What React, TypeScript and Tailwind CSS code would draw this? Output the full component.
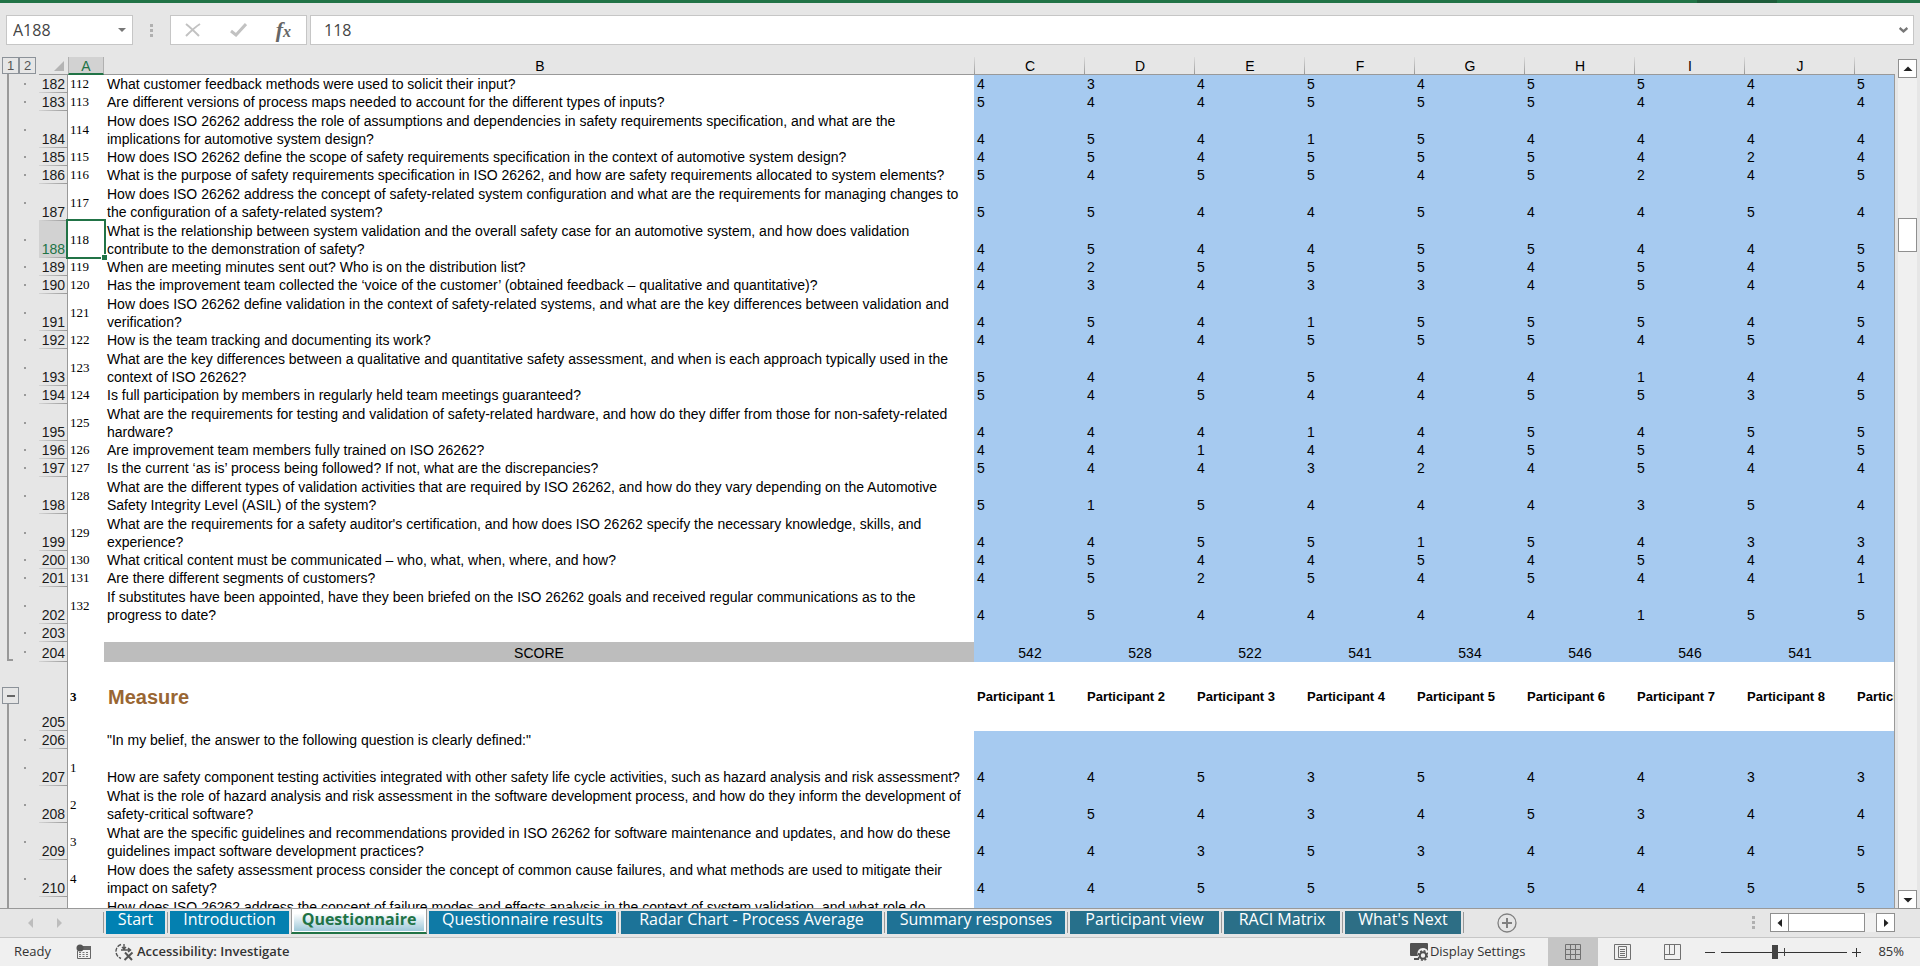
import type { ReactNode } from "react";

type Row = {
  n: number;
  id?: string;
  text?: string[];
  scores?: string;
};

const ROWS: Row[] = [
  { n: 182, id: "112", text: ["What customer feedback methods were used to solicit their input?"], scores: "434545545" },
  { n: 183, id: "113", text: ["Are different versions of process maps needed to account for the different types of inputs?"], scores: "544555444" },
  { n: 184, id: "114", text: ["How does ISO 26262 address the role of assumptions and dependencies in safety requirements specification, and what are the", "implications for automotive system design?"], scores: "454154444" },
  { n: 185, id: "115", text: ["How does ISO 26262 define the scope of safety requirements specification in the context of automotive system design?"], scores: "454555424" },
  { n: 186, id: "116", text: ["What is the purpose of safety requirements specification in ISO 26262, and how are safety requirements allocated to system elements?"], scores: "545545245" },
  { n: 187, id: "117", text: ["How does ISO 26262 address the concept of safety-related system configuration and what are the requirements for managing changes to", "the configuration of a safety-related system?"], scores: "554454454" },
  { n: 188, id: "118", text: ["What is the relationship between system validation and the overall safety case for an automotive system, and how does validation", "contribute to the demonstration of safety?"], scores: "454455445" },
  { n: 189, id: "119", text: ["When are meeting minutes sent out? Who is on the distribution list?"], scores: "425554545" },
  { n: 190, id: "120", text: ["Has the improvement team collected the ‘voice of the customer’ (obtained feedback – qualitative and quantitative)?"], scores: "434334544" },
  { n: 191, id: "121", text: ["How does ISO 26262 define validation in the context of safety-related systems, and what are the key differences between validation and", "verification?"], scores: "454155545" },
  { n: 192, id: "122", text: ["How is the team tracking and documenting its work?"], scores: "444555454" },
  { n: 193, id: "123", text: ["What are the key differences between a qualitative and quantitative safety assessment, and when is each approach typically used in the", "context of ISO 26262?"], scores: "544544144" },
  { n: 194, id: "124", text: ["Is full participation by members in regularly held team meetings guaranteed?"], scores: "545445535" },
  { n: 195, id: "125", text: ["What are the requirements for testing and validation of safety-related hardware, and how do they differ from those for non-safety-related", "hardware?"], scores: "444145455" },
  { n: 196, id: "126", text: ["Are improvement team members fully trained on ISO 26262?"], scores: "441445545" },
  { n: 197, id: "127", text: ["Is the current ‘as is’ process being followed? If not, what are the discrepancies?"], scores: "544324544" },
  { n: 198, id: "128", text: ["What are the different types of validation activities that are required by ISO 26262, and how do they vary depending on the Automotive", "Safety Integrity Level (ASIL) of the system?"], scores: "515444354" },
  { n: 199, id: "129", text: ["What are the requirements for a safety auditor's certification, and how does ISO 26262 specify the necessary knowledge, skills, and", "experience?"], scores: "445515433" },
  { n: 200, id: "130", text: ["What critical content must be communicated – who, what, when, where, and how?"], scores: "454454544" },
  { n: 201, id: "131", text: ["Are there different segments of customers?"], scores: "452545441" },
  { n: 202, id: "132", text: ["If substitutes have been appointed, have they been briefed on the ISO 26262 goals and received regular communications as to the", "progress to date?"], scores: "454444155" },
];

const MEASURE_ROWS: Row[] = [
  { n: 207, id: "1", text: ["", "How are safety component testing activities integrated with other safety life cycle activities, such as hazard analysis and risk assessment?"], scores: "445354433" },
  { n: 208, id: "2", text: ["What is the role of hazard analysis and risk assessment in the software development process, and how do they inform the development of", "safety-critical software?"], scores: "454345344" },
  { n: 209, id: "3", text: ["What are the specific guidelines and recommendations provided in ISO 26262 for software maintenance and updates, and how do these", "guidelines impact software development practices?"], scores: "443534445" },
  { n: 210, id: "4", text: ["How does the safety assessment process consider the concept of common cause failures, and what methods are used to mitigate their", "impact on safety?"], scores: "445555455" },
];

const TOTALS = ["542", "528", "522", "541", "534", "546", "546", "541", ""];
const COLUMNS = ["C", "D", "E", "F", "G", "H", "I", "J", ""];

const TABS = [
  { label: "Start", style: "w-[59px] bg-[#0081b3]" },
  { label: "Introduction", style: "w-[119px] bg-[#0480b0]" },
  { label: "Questionnaire", style: "" },
  { label: "Questionnaire results", style: "w-[187px] bg-[#0f7aa6]" },
  { label: "Radar Chart - Process Average", style: "w-[261px] bg-[#1c7398]" },
  { label: "Summary responses", style: "w-[178px] bg-[#1f7295]" },
  { label: "Participant view", style: "w-[149px] bg-[#27708b]" },
  { label: "RACI Matrix", style: "w-[116px] bg-[#2a6f88]" },
  { label: "What's Next", style: "w-[116px] bg-[#2d6e85]" },
];

function Dots() {
  return (
    <div className="flex flex-col gap-[2px]">
      <span className="size-[3px] bg-[#b0b0b0]" />
      <span className="size-[3px] bg-[#b0b0b0]" />
      <span className="size-[3px] bg-[#b0b0b0]" />
    </div>
  );
}

function RowHead({ n, dot = true, active = false }: { n?: number; dot?: boolean; active?: boolean }) {
  return (
    <>
      <td className="pl-[5px] align-middle">{dot && <span className="block size-[2px] bg-[#999]" />}</td>
      <th
        scope="row"
        className={`border-r border-[#999] bg-[linear-gradient(to_right,#d4d4d4,#999)] bg-[length:100%_1px] bg-bottom bg-no-repeat pr-[2px] text-right align-bottom font-normal ${
          active ? "bg-[#d2d2d2] text-[#217346]" : "text-[#1a1a1a]"
        }`}
      >
        {n}
      </th>
    </>
  );
}

function QuestionRow({ row }: { row: Row }) {
  const active = row.n === 188;
  return (
    <tr className={row.text && row.text.length > 1 ? "h-[37px]" : "h-[18px]"}>
      <RowHead n={row.n} active={active} />
      <td className="relative bg-white pl-[2px] align-middle font-['Liberation_Serif',serif] text-[13px] leading-4">
        {row.id}
        {active && (
          <span className="pointer-events-none absolute -top-[2px] -right-[2px] -bottom-px -left-[2px] z-10 border-2 border-[#217346]">
            <span className="absolute -right-[4px] -bottom-[4px] size-[7px] border border-white bg-[#217346]" />
          </span>
        )}
      </td>
      <td className="bg-white pl-[3px] align-bottom whitespace-nowrap">
        {row.text?.map((line) => (
          <span key={line} className="block">
            {line}
          </span>
        ))}
      </td>
      {row.scores?.split("").map((s, i) => (
        <td key={i} className="bg-[#a6caf0] pl-[3px] align-bottom">
          {s}
        </td>
      ))}
    </tr>
  );
}

function Sheet() {
  return (
    <table className="w-[1926px] table-fixed border-separate border-spacing-0 font-['Liberation_Sans',Arial,sans-serif] text-[14px] leading-[18px] text-black">
      <colgroup>
        <col className="w-[20px]" />
        <col className="w-[29px]" />
        <col className="w-[36px]" />
        <col className="w-[870px]" />
        {COLUMNS.map((_, i) => (
          <col key={i} className="w-[110px]" />
        ))}
      </colgroup>
      <thead>
        <tr className="h-[18px]">
          <td className="align-top">
            <LevelButton>2</LevelButton>
          </td>
          <td className="border-b border-[#999]">
            <svg className="ml-[15px] block size-[10px]" viewBox="0 0 10 10">
              <path d="M10 0v10H0z" fill="#b4b4b4" />
            </svg>
          </td>
          <th scope="col" className="border-x border-b-2 border-x-[#b0b0b0] border-b-[#217346] bg-[#d2d2d2] pt-[2px] leading-[14px] font-normal text-[#217346]">
            A
          </th>
          <th scope="col" className="border-b border-[#999] pt-[2px] pl-[2px] leading-[15px] font-normal">
            B
          </th>
          {COLUMNS.map((c, i) => (
            <th
              key={i}
              scope="col"
              className="border-b border-[#999] bg-[linear-gradient(to_bottom,#dcdcdc,#999)] bg-[length:1px_100%] bg-left bg-no-repeat pt-[2px] pl-[2px] leading-[15px] font-normal"
            >
              {c}
            </th>
          ))}
        </tr>
      </thead>
      <tbody>
        {ROWS.map((row) => (
          <QuestionRow key={row.n} row={row} />
        ))}
        <tr className="h-[18px]">
          <RowHead n={203} />
          <td className="bg-white" />
          <td className="bg-white" />
          <td colSpan={9} className="bg-[#a6caf0]" />
        </tr>
        <tr className="h-[20px]">
          <RowHead n={204} />
          <td className="bg-white" />
          <td className="bg-[#bdbdbd] text-center align-bottom">SCORE</td>
          {TOTALS.map((t, i) => (
            <td key={i} className="bg-[#a6caf0] pl-[2px] text-center align-bottom">
              {t}
            </td>
          ))}
        </tr>
        <tr className="h-[69px]">
          <RowHead n={205} dot={false} />
          <td className="bg-white pl-[2px] align-middle font-['Liberation_Serif',serif] text-[13px] font-bold">3</td>
          <td className="bg-white pl-1 align-middle text-[20px] font-bold text-[#996633]">Measure</td>
          {COLUMNS.map((_, i) => (
            <td key={i} className="bg-white pl-[3px] align-middle text-[13px] font-bold whitespace-nowrap">
              Participant {i + 1}
            </td>
          ))}
        </tr>
        <tr className="h-[18px]">
          <RowHead n={206} />
          <td className="bg-white" />
          <td className="bg-white pl-[3px]">"In my belief, the answer to the following question is clearly defined:"</td>
          <td colSpan={9} className="bg-[#a6caf0]" />
        </tr>
        {MEASURE_ROWS.map((row) => (
          <QuestionRow key={row.n} row={row} />
        ))}
        <tr className="h-[37px]">
          <RowHead dot={false} />
          <td className="bg-white" />
          <td className="bg-white pt-px pl-[3px] align-top whitespace-nowrap">
            How does ISO 26262 address the concept of failure modes and effects analysis in the context of system validation, and what role do
          </td>
          <td colSpan={9} className="bg-[#a6caf0]" />
        </tr>
      </tbody>
    </table>
  );
}

function LevelButton({ children }: { children: ReactNode }) {
  return (
    <button className="flex h-[17px] w-[17px] shrink-0 items-center justify-center border border-[#8c9299] font-['Liberation_Sans',Arial,sans-serif] text-[13px] leading-none text-[#555]">
      {children}
    </button>
  );
}

function FormulaBar() {
  return (
    <div className="flex h-[30px] items-stretch pr-[6px] pl-[6px] text-[16px] text-[#444]">
      <div className="flex w-[127px] items-center border border-[#c6c6c6] bg-white pr-[6px] pl-[6px]">
        <input aria-label="Name box" defaultValue="A188" className="w-full min-w-0 bg-transparent outline-none" />
        <svg className="h-1 w-2 shrink-0" viewBox="0 0 8 4">
          <path d="M0 0h8L4 4z" fill="#777" />
        </svg>
      </div>
      <div className="flex w-[37px] items-center justify-center">
        <Dots />
      </div>
      <div className="flex w-[137px] items-center justify-between border border-[#c6c6c6] bg-white pr-[15px] pl-[14px]">
        <button aria-label="Cancel">
          <svg className="h-[14px] w-[16px]" viewBox="0 0 16 14" fill="none" stroke="#c2c2c2" strokeWidth="2">
            <path d="M1 1c5 4 9 8 13 12M15 1C10 4 5 9 1 13" />
          </svg>
        </button>
        <button aria-label="Enter">
          <svg className="h-[14px] w-[17px]" viewBox="0 0 17 14" fill="none" stroke="#c2c2c2" strokeWidth="3">
            <path d="M1 8l5 4L16 1" />
          </svg>
        </button>
        <button aria-label="Insert function" className="flex items-baseline font-['Liberation_Serif',serif] text-[22px] leading-none font-bold text-[#666] italic">
          f<span className="text-[16px]">x</span>
        </button>
      </div>
      <div className="ml-[3px] flex min-w-0 flex-1 items-center border border-[#c6c6c6] bg-white pr-[5px] pl-[13px]">
        <input aria-label="Formula" defaultValue="118" className="min-w-0 flex-1 bg-transparent outline-none" />
        <svg className="h-[6px] w-[9px]" viewBox="0 0 9 6" fill="none" stroke="#777" strokeWidth="2.4">
          <path d="M.6 1l3.9 3.4L8.4 1" />
        </svg>
      </div>
    </div>
  );
}

function Outline() {
  return (
    <div className="flex w-[19px] shrink-0 flex-col pl-[2px]">
      <LevelButton>1</LevelButton>
      <div className="ml-[5px] h-[587px] w-[6px] shrink-0 border-b-2 border-l-2 border-[#999]" />
      <button aria-label="Collapse group" className="mt-[26px] flex size-[17px] shrink-0 items-center justify-center border border-[#8c9299]">
        <span className="h-[2px] w-2 bg-[#666]" />
      </button>
      <div className="ml-[5px] flex-1 border-l-2 border-[#999]" />
    </div>
  );
}

function ArrowButton({ label, d }: { label: string; d: string }) {
  return (
    <button aria-label={label} className="flex size-[19px] shrink-0 items-center justify-center border border-[#8f8f8f] bg-white">
      <svg className="size-[10px]" viewBox="0 0 10 10">
        <path d={d} fill="#222" />
      </svg>
    </button>
  );
}

function SheetTabs() {
  return (
    <div className="flex h-[28px] shrink-0 items-start bg-[#e6e6e6] pr-[25px]">
      <div className="flex h-[28px] w-[103px] shrink-0 items-center gap-[24px] pl-[28px]">
        <svg className="h-[10px] w-[5px]" viewBox="0 0 5 10">
          <path d="M5 0v10L0 5z" fill="#bdbdbd" />
        </svg>
        <svg className="h-[10px] w-[5px]" viewBox="0 0 5 10">
          <path d="M0 0v10l5-5z" fill="#bdbdbd" />
        </svg>
      </div>
      <nav className="flex text-[16px] leading-4 text-white">
        <span className="mt-[3px] h-[21px] w-px bg-[#999]" />
        {TABS.map((t) =>
          t.label === "Questionnaire" ? (
            <a
              key={t.label}
              href="#questionnaire"
              className="-ml-px h-[25px] w-[136px] border-x border-b-2 border-x-[#999] border-b-[#217346] bg-white px-[2px] text-center font-bold text-[#217346]"
            >
              <span className="block h-[22px] bg-linear-to-b from-white from-20% to-[#9dc8d9] pt-[2px]">{t.label}</span>
            </a>
          ) : (
            <span key={t.label} className="flex">
              <a href="#sheet" className={`mt-[2px] ml-[2px] block h-[23px] text-center whitespace-nowrap ${t.style}`}>
                {t.label}
              </a>
              <span className={`mt-[3px] ml-[2px] h-[21px] w-px ${t.label === "Introduction" ? "" : "bg-[#999]"}`} />
            </span>
          ),
        )}
      </nav>
      <button aria-label="New sheet" className="mt-[4px] ml-[33px]">
        <svg className="size-5" viewBox="0 0 20 20" fill="none" stroke="#808080">
          <circle cx="10" cy="10" r="9" strokeWidth="1.3" />
          <path d="M10 5v10M5 10h10" strokeWidth="2" />
        </svg>
      </button>
      <div className="mt-[7px] ml-auto">
        <Dots />
      </div>
      <div className="mt-[4px] ml-[15px] flex bg-[#f0f0f0]">
        <ArrowButton label="Scroll left" d="M7 1v8L2.500 5z" />
        <div className="-ml-px h-[19px] w-[77px] border border-[#8f8f8f] bg-white" />
        <div className="w-[11px]" />
        <ArrowButton label="Scroll right" d="M3 1v8l4.500-4z" />
      </div>
    </div>
  );
}

function StatusBar() {
  return (
    <footer className="flex h-[29px] shrink-0 items-center border-t border-[#c6c6c6] bg-[#f0f0f0] pr-[16px] pl-[14px] text-[13px] text-[#333]">
      <span className="w-[62px]">Ready</span>
      <svg className="h-[16px] w-[16px]" viewBox="0 0 16 16" fill="none">
        <path d="M1.500 7v7.500h13v-11H7" stroke="#666" />
        <path d="M6 2h9v4H6z" fill="#666" />
        <circle cx="4" cy="4" r="3.500" fill="#555" />
        <path d="M3 8.500h10M3 10.500h10M3 12.500h10" stroke="#777" strokeDasharray="2 1.500" />
      </svg>
      <button className="ml-[23px] flex items-center gap-[3px] font-semibold">
        <svg className="h-[18px] w-[19px]" viewBox="0 0 19 18" fill="none" stroke="#555" strokeWidth="1.400">
          <path d="M6 1.500C2 3 .8 6 1 9c.3 3 2 5 5 6.500" strokeDasharray="4 1.300" />
          <path d="M9 1v5M7 4l2 2 2-2M6 7h10M13 5l2.500 2-2.500 2" />
          <path d="M10 9.500l7 7.500M17.500 9.500L9.500 17" strokeWidth="2" />
        </svg>
        Accessibility: Investigate
      </button>
      <button className="ml-auto flex items-center gap-[2px]">
        <svg className="size-[18px]" viewBox="0 0 18 18">
          <path d="M1 0h16a1 1 0 011 1v7a5.500 5.500 0 00-10 5H1a1 1 0 01-1-1V1a1 1 0 011-1zM4 15h5v2H4z" fill="#505050" />
          <circle cx="13" cy="12.500" r="3.200" fill="none" stroke="#505050" strokeWidth="2" />
          <circle cx="13" cy="12.500" r="4.700" fill="none" stroke="#505050" strokeWidth="1.500" strokeDasharray="2 1.700" />
        </svg>
        Display Settings
      </button>
      <button aria-label="Normal view" className="ml-[23px] flex h-[28px] w-[50px] items-center justify-center bg-[#c5c5c5]">
        <svg className="size-4" viewBox="0 0 16 16" fill="none" stroke="#707070">
          <path d="M.5.5h15v15H.5zM5.500 0v16M10.500 0v16M0 5.500h16M0 10.500h16" />
        </svg>
      </button>
      <button aria-label="Page layout view" className="ml-[16px]">
        <svg className="h-4 w-[17px]" viewBox="0 0 17 16" fill="none" stroke="#707070">
          <path d="M.5.500h16v15H.5zM4.500 2.500h8v11h-8zM6 5.500h5M6 7.500h5M6 9.500h5M6 11.500h5" />
        </svg>
      </button>
      <button aria-label="Page break preview" className="ml-[33px]">
        <svg className="h-4 w-[17px]" viewBox="0 0 17 16" fill="none" stroke="#707070">
          <path d="M.5.500h16v15H.5zM.5 10.500h10V.5M5.500.500v10" />
        </svg>
      </button>
      <button aria-label="Zoom out" className="ml-[24px] h-px w-[10px] bg-[#333]" />
      <div className="relative ml-[6px] flex h-4 w-[126px] items-center">
        <span className="absolute top-1 left-[63px] h-2 w-px bg-[#444]" />
        <input
          type="range"
          aria-label="Zoom"
          min={0}
          max={100}
          defaultValue={42}
          className="h-px w-full appearance-none bg-[#333] [&::-webkit-slider-thumb]:h-[14px] [&::-webkit-slider-thumb]:w-[6px] [&::-webkit-slider-thumb]:appearance-none [&::-webkit-slider-thumb]:bg-[#444]"
        />
      </div>
      <button aria-label="Zoom in" className="ml-[5px]">
        <svg className="size-[9px]" viewBox="0 0 9 9" stroke="#333">
          <path d="M4.500 0v9M0 4.500h9" />
        </svg>
      </button>
      <span className="ml-[17px]">85%</span>
    </footer>
  );
}

export default function App() {
  return (
    <div className="flex h-screen flex-col overflow-hidden bg-[#e6e6e6] font-['Open_Sans',sans-serif]">
      <div className="flex h-[3px] shrink-0 justify-end bg-[#217346] pr-[143px]">
        <span className="w-20 bg-[#1e5c3a]" />
      </div>
      <div className="pt-3 pb-3">
        <FormulaBar />
      </div>
      <div className="flex min-h-0 flex-1 border-b border-[#999] pr-[3px]">
        <Outline />
        <div className="min-w-0 flex-1 overflow-hidden">
          <Sheet />
        </div>
        <div className="mt-[17px] w-px bg-[#999]" />
        <div className="mt-[2px] -mb-px ml-[3px] flex w-[19px] flex-col bg-[#f0f0f0]">
          <ArrowButton label="Scroll up" d="M.5 7h9L5 2.500z" />
          <div className="mt-[140px] h-[34px] border border-[#8f8f8f] bg-white" />
          <div className="flex-1" />
          <ArrowButton label="Scroll down" d="M.5 3h9L5 7.500z" />
        </div>
      </div>
      <SheetTabs />
      <StatusBar />
    </div>
  );
}
